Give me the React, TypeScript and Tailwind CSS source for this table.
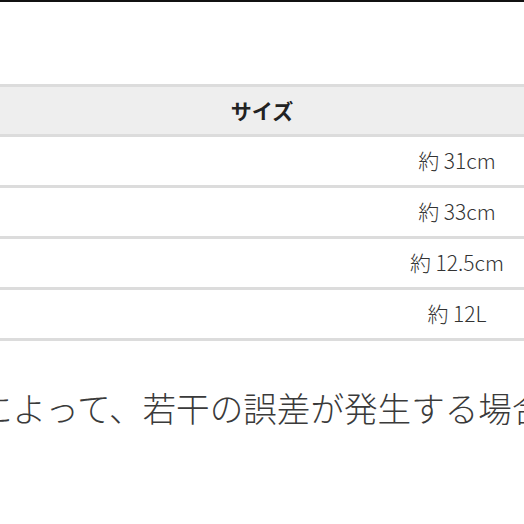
const rows = ["約 31cm", "約 33cm", "約 12.5cm", "約 12L"];

const App = () => {
  return (
    <div
      className="w-[524px] h-[524px] bg-white overflow-hidden text-[#333]"
      style={{ fontFamily: '"Noto Sans CJK JP", "Noto Sans", sans-serif' }}
    >
      <div className="h-[2px] bg-[#111]" />
      <div className="h-[82px]" />
      <div className="border-y-[3px] border-[#dcdcdc]">
        <div className="h-[47px] bg-[#eeeeee] flex items-center justify-center">
          <span className="text-[21px] font-bold text-[#222]">サイズ</span>
        </div>
      </div>
      {rows.map((r) => (
        <div key={r} className="h-[51px] border-b-[3px] border-[#dcdcdc] flex">
          <div className="w-[390px]" />
          <div className="flex-1 flex items-center justify-center text-[21px] font-light text-[#333]">
            {r}
          </div>
        </div>
      ))}
      <div className="mt-[47px] -ml-[21px] whitespace-nowrap text-[33.6px] leading-[40px] font-light text-[#3a3a3a]">
        によって、若干の誤差が発生する場合
      </div>
    </div>
  );
};

export default App;
